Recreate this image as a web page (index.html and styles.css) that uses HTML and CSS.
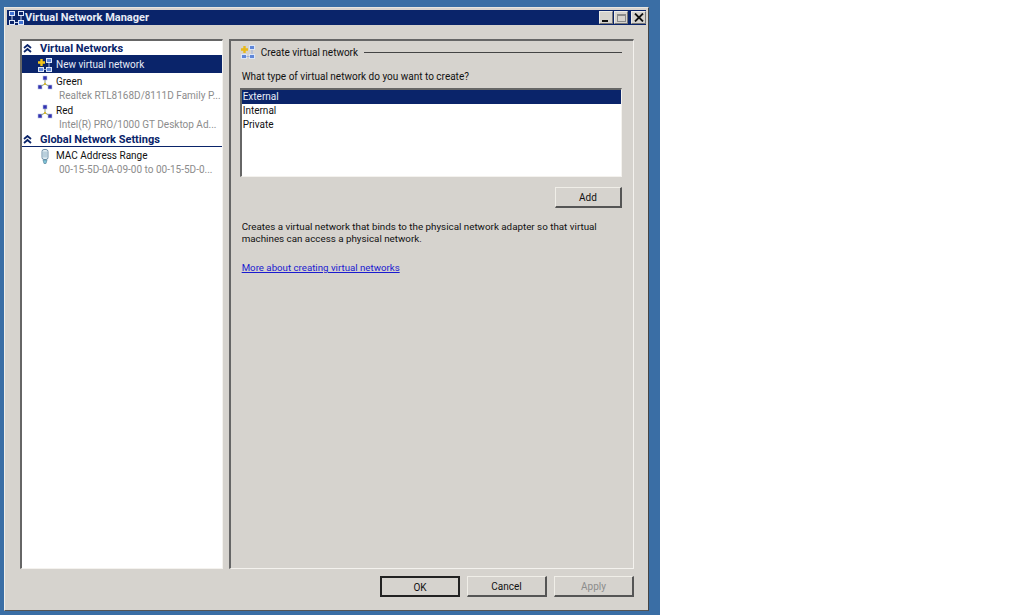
FILE: index.html
```html
<!DOCTYPE html>
<html lang="en">
<head>
<meta charset="utf-8">
<title>Virtual Network Manager</title>
<link rel="stylesheet" href="styles.css">
</head>
<body>
<div class="desktop">
  <div class="window">
    <div class="titlebar">
      <svg class="app-icon" width="17" height="16" viewBox="0 0 17 16">
        <rect x="1.500" y="1.500" width="5" height="4" fill="#3f6fd0" stroke="#dfe8f8"/>
        <rect x="10.500" y="1.500" width="5" height="4" fill="#0a246a" stroke="#dfe8f8"/>
        <rect x="1.500" y="10.500" width="5" height="4" fill="#0a246a" stroke="#dfe8f8"/>
        <rect x="10.500" y="10.500" width="5" height="4" fill="#3f6fd0" stroke="#dfe8f8"/>
        <path d="M13 6v4M4 6v4M7 12.500h3" stroke="#c8d4ec" fill="none"/>
      </svg>
      <span class="title-text">Virtual Network Manager</span>
      <div class="caption-buttons">
        <div class="cap-btn"><span class="cap-min"></span></div>
        <div class="cap-btn"><span class="cap-max"></span></div>
        <div class="cap-btn cap-close">
          <svg width="10" height="9" viewBox="0 0 10 9"><path d="M1 0.500l8 8M9 0.500l-8 8" stroke="#111" stroke-width="1.800" fill="none"/></svg>
        </div>
      </div>
    </div>
    <div class="client">
      <div class="panes">
        <div class="tree">
          <div class="section-head">
            <svg class="chev" width="9" height="9" viewBox="0 0 9 9"><path d="M1 4l3.500-3 3.500 3M1 8l3.500-3 3.500 3" stroke="#0a246a" stroke-width="1.800" fill="none"/></svg>
            <span>Virtual Networks</span>
          </div>
          <div class="tree-item selected">
            <svg class="item-icon" width="16" height="16" viewBox="0 0 16 16">
              <use href="#net"/>
              <path d="M1 5.500h7M4.500 2v7" stroke="#f5c518" stroke-width="2.400"/>
            </svg>
            <span>New virtual network</span>
          </div>
          <div class="tree-item double">
            <svg class="item-icon" width="16" height="16" viewBox="0 0 16 16"><use href="#net-small"/></svg>
            <div class="item-text"><span>Green</span><span class="sub">Realtek RTL8168D/8111D Family P...</span></div>
          </div>
          <div class="tree-item double">
            <svg class="item-icon" width="16" height="16" viewBox="0 0 16 16"><use href="#net-small"/></svg>
            <div class="item-text"><span>Red</span><span class="sub">Intel(R) PRO/1000 GT Desktop Ad...</span></div>
          </div>
          <div class="section-head">
            <svg class="chev" width="9" height="9" viewBox="0 0 9 9"><path d="M1 4l3.500-3 3.500 3M1 8l3.500-3 3.500 3" stroke="#0a246a" stroke-width="1.800" fill="none"/></svg>
            <span>Global Network Settings</span>
          </div>
          <div class="tree-item double">
            <svg class="item-icon" width="16" height="16" viewBox="0 0 16 16">
              <rect x="5" y="0.500" width="6" height="10" rx="2" fill="#e4eef4" stroke="#6f8fa8"/>
              <path d="M7 2.500v6M9 2.500v6" stroke="#8fb0c4"/>
              <path d="M6 11h4l-1 3.500h-2z" fill="#7fc4d8" stroke="#5a8aa0" stroke-width="0.700"/>
            </svg>
            <div class="item-text"><span>MAC Address Range</span><span class="sub">00-15-5D-0A-09-00 to 00-15-5D-0...</span></div>
          </div>
        </div>
        <div class="detail">
          <div class="group-head">
            <svg class="group-icon" width="16" height="16" viewBox="0 0 16 16">
              <use href="#net"/>
              <path d="M1 5.500h7M4.500 2v7" stroke="#e8b818" stroke-width="2.400"/>
            </svg>
            <span>Create virtual network</span>
            <div class="group-rule"></div>
          </div>
          <p class="question">What type of virtual network do you want to create?</p>
          <div class="listbox">
            <div class="list-row selected">External</div>
            <div class="list-row">Internal</div>
            <div class="list-row">Private</div>
          </div>
          <div class="add-row"><button class="btn btn-add" type="button">Add</button></div>
          <p class="description">Creates a virtual network that binds to the physical network adapter so that virtual machines can access a physical network.</p>
          <a class="more-link" href="#">More about creating virtual networks</a>
        </div>
      </div>
      <div class="footer">
        <button class="btn btn-default" type="button">OK</button>
        <button class="btn" type="button">Cancel</button>
        <button class="btn btn-disabled" type="button">Apply</button>
      </div>
    </div>
  </div>
</div>
<svg class="defs" width="0" height="0">
  <defs>
    <g id="net">
      <rect x="9.500" y="1.500" width="5" height="4" fill="#5f86d8" stroke="#dbe6f7"/>
      <rect x="1.500" y="10.500" width="5" height="4" fill="#5f86d8" stroke="#dbe6f7"/>
      <rect x="9.500" y="10.500" width="5" height="4" fill="#5f86d8" stroke="#dbe6f7"/>
      <path d="M12 6v4M6.500 12.500h3" stroke="#9cb0dc" fill="none"/>
    </g>
    <g id="net-small">
      <rect x="6" y="1" width="4" height="4" fill="#3232b0" stroke="#b8c4e8" stroke-width="0.600"/>
      <rect x="1" y="10" width="4" height="4" fill="#3232b0" stroke="#b8c4e8" stroke-width="0.600"/>
      <rect x="11" y="10" width="4" height="4" fill="#3232b0" stroke="#b8c4e8" stroke-width="0.600"/>
      <path d="M8 5v3M8 9l-4 2M8 9l4 2" stroke="#8a9a78" fill="none"/>
      <rect x="7" y="8" width="2" height="2" fill="#d8b830"/>
    </g>
  </defs>
</svg>
</body>
</html>
```
FILE: styles.css
```css
* { box-sizing: border-box; }
html, body { margin: 0; padding: 0; background: #fff; }
body { width: 1024px; height: 615px; overflow: hidden; font-family: Roboto, "Liberation Sans", Arial, sans-serif; font-size: 10px; color: #111; }
.desktop { width: 660px; height: 615px; background: #3a6ea5; padding: 7px 0 0 4px; }
.window {
  width: 645px; height: 604px; background: #d6d3ce; display: flex; flex-direction: column;
  border-top: 1px solid #e8e6e0; border-left: 1px solid #f0eee8;
  border-right: 1px solid #444; border-bottom: 1px solid #555;
  padding: 2px;
}
.titlebar { height: 15px; flex: none; background: #0a246a; display: flex; align-items: center; color: #fff; }
.app-icon { flex: none; margin-left: 1px; }
.title-text { font-weight: bold; font-size: 11px; color: #e8ecf6; }
.caption-buttons { margin-left: auto; display: flex; gap: 1px; }
.cap-btn { width: 14px; height: 13px; background: #d6d3ce; border: 1px solid #ecebe6; border-right-color: #777; border-bottom-color: #777; display: flex; align-items: center; justify-content: center; }
.cap-close { margin-left: 2px; width: 15px; }
.cap-min { width: 6px; height: 2px; background: #111; align-self: flex-end; margin-bottom: 1px; margin-right: 2px; }
.cap-max { width: 9px; height: 8px; border: 1px solid #8a8a8a; border-top-width: 2px; }
.client { flex: 1; display: flex; flex-direction: column; padding: 14px 12px 0 13px; min-height: 0; }
.panes { display: flex; gap: 6px; height: 530px; flex: none; }
.tree { width: 203px; background: #fff; border-top: 2px solid #666; border-left: 2px solid #666; border-bottom: 1px solid #f4f2ee; border-right: 1px solid #f4f2ee; }
.section-head { height: 15px; display: flex; align-items: center; border-bottom: 1px solid #0a246a; color: #0a246a; font-weight: bold; font-size: 11px; padding-left: 1px; }
.chev { flex: none; margin-right: 8px; }
.tree-item { display: flex; padding-left: 15px; height: 17px; align-items: center; }
.tree-item.selected { background: #0a246a; color: #e8ecf6; }
.tree-item.double { height: 29px; align-items: flex-start; padding-top: 1px; }
.tree-item.selected + .double { margin-top: 1px; }
.section-head + .double { margin-top: 1px; }
.item-icon { flex: none; margin-right: 3px; }
.item-text { display: flex; flex-direction: column; line-height: 14px; }
.sub { color: #8c8c8c; margin-left: 3px; white-space: nowrap; }
.detail { width: 406px; border-top: 2px solid #666; border-left: 2px solid #666; border-bottom: 1px solid #f4f2ee; border-right: 1px solid #f4f2ee; padding: 3px 11px 0 9px; }
.group-head { display: flex; align-items: center; height: 16px; }
.group-icon { flex: none; margin-right: 5px; }
.group-rule { flex: 1; height: 1px; background: #444; margin-left: 6px; }
.question { margin: 10px 0 0 2px; line-height: 14px; }
.listbox { margin-top: 4px; height: 89px; background: #fff; border-top: 2px solid #666; border-left: 2px solid #666; border-right: 1px solid #f4f2ee; border-bottom: 1px solid #f4f2ee; }
.list-row { height: 14px; line-height: 14px; padding-left: 1px; }
.list-row.selected { background: #0a246a; color: #e8ecf6; }
.add-row { display: flex; justify-content: flex-end; margin-top: 10px; }
.btn { width: 80px; height: 21px; background: #d6d3ce; font: inherit; color: #111; padding: 1px 0 0; border: 1px solid #f0eee8; border-right: 2px solid #555; border-bottom: 2px solid #555; }
.btn-add { width: 67px; }
.btn-default { border: 2px solid #222; }
.btn-disabled { color: #8c8c8c; }
.description { margin: 13px 0 0 2px; width: 370px; font-size: 9.8px; line-height: 12px; }
.more-link { display: block; margin: 16px 0 0 2px; font-size: 9.7px; color: #1a1ad0; line-height: 14px; }
.footer { display: flex; justify-content: flex-end; gap: 7px; margin-top: 7px; }
.defs { position: absolute; }
```
